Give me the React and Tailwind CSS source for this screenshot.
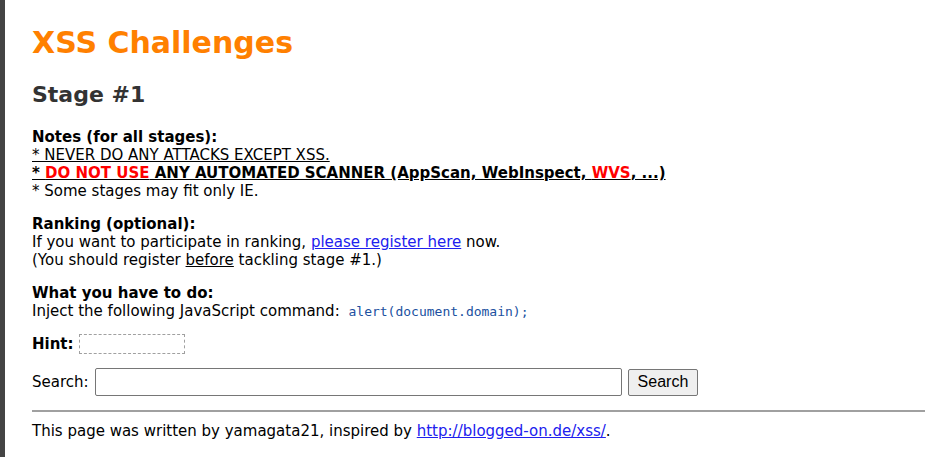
export default function App() {
  return (
    <div className="flex min-h-[457px] bg-white font-['Verdana','DejaVu_Sans',sans-serif] text-[15px] leading-[18px] text-black">
      <div className="w-[5px] shrink-0 bg-[#444444]" />
      <div className="flex-1 pl-[27px] pr-[6px]">
        <h1 className="mt-[25px] text-[30px] font-bold leading-[36px] text-[#ff8000]">XSS Challenges</h1>
        <h2 className="mt-[19px] text-[22px] font-bold leading-[30px] text-[#333333]">Stage #1</h2>

        <div className="mt-[18px]">
          <div className="font-bold">Notes (for all stages):</div>
          <div className="underline">* NEVER DO ANY ATTACKS EXCEPT XSS.</div>
          <div className="font-bold underline">
            * <span className="text-[#ff0000]">DO NOT USE</span> ANY AUTOMATED SCANNER (AppScan, WebInspect, <span className="text-[#ff0000]">WVS</span>, ...)
          </div>
          <div>* Some stages may fit only IE.</div>
        </div>

        <div className="mt-[15px]">
          <div className="font-bold">Ranking (optional):</div>
          <div>
            If you want to participate in ranking, <a href="#" className="text-[#2020ee] underline">please register here</a> now.
          </div>
          <div>
            (You should register <span className="underline">before</span> tackling stage #1.)
          </div>
        </div>

        <div className="mt-[15px]">
          <div className="font-bold">What you have to do:</div>
          <div>
            Inject the following JavaScript command:{' '}
            <code className="ml-[4px] font-['DejaVu_Sans_Mono',monospace] text-[13px] text-[#2050a0]">alert(document.domain);</code>
          </div>
        </div>

        <div className="mt-[13px] flex items-center gap-[5px]">
          <span className="font-bold">Hint:</span>
          <span className="inline-block h-[20px] w-[106px] border border-dashed border-[#a0a0a0]" />
        </div>

        <div className="mt-[14px] flex items-center">
          <label className="mr-[6px]">Search:</label>
          <input type="text" className="h-[28px] w-[527px] rounded-[2px] border border-[#767676] bg-white px-1" />
          <button className="ml-[6px] h-[27px] rounded-[2px] border border-[#767676] bg-[#efefef] px-[9px] font-['Liberation_Sans',Arial,sans-serif] text-[16px] leading-none text-black">
            Search
          </button>
        </div>

        <hr className="mt-[14px] border-0 border-t-2 border-[#a0a0a0]" />

        <div className="mt-[10px]">
          This page was written by yamagata21, inspired by{' '}
          <a href="#" className="text-[#2020ee] underline">http://blogged-on.de/xss/</a>.
        </div>
      </div>
    </div>
  );
}
